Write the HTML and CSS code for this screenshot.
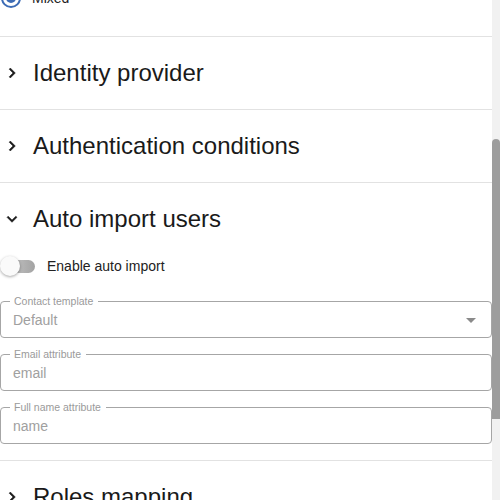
FILE: index.html
```html
<!DOCTYPE html>
<html>
<head>
<meta charset="utf-8">
<link rel="stylesheet" href="styles.css">
</head>
<body>
<div class="page">
  <div class="content">
    <div class="section first">
      <label class="radio-row">
        <span class="radio"><span class="dot"></span></span>
        <span class="radio-label">Mixed</span>
      </label>
    </div>

    <div class="section">
      <div class="header">
        <svg class="chev" viewBox="0 0 24 24"><path d="M10 6L8.59 7.41 13.17 12l-4.58 4.59L10 18l6-6z"/></svg>
        <span class="title">Identity provider</span>
      </div>
    </div>

    <div class="section">
      <div class="header">
        <svg class="chev" viewBox="0 0 24 24"><path d="M10 6L8.59 7.41 13.17 12l-4.58 4.59L10 18l6-6z"/></svg>
        <span class="title">Authentication conditions</span>
      </div>
    </div>

    <div class="section open">
      <div class="header">
        <svg class="chev" viewBox="0 0 24 24"><path d="M16.59 8.59L12 13.17 7.41 8.59 6 10l6 6 6-6z"/></svg>
        <span class="title">Auto import users</span>
      </div>
      <div class="body">
        <div class="toggle-row">
          <span class="switch"><span class="track"></span><span class="thumb"></span></span>
          <span class="toggle-label">Enable auto import</span>
        </div>

        <fieldset class="field">
          <legend>Contact template</legend>
          <div class="value-row">
            <span class="value">Default</span>
            <svg class="caret" viewBox="7 10 10 5"><path d="M7 10l5 5 5-5z"/></svg>
          </div>
        </fieldset>

        <fieldset class="field">
          <legend>Email attribute</legend>
          <div class="value-row"><span class="value">email</span></div>
        </fieldset>

        <fieldset class="field">
          <legend>Full name attribute</legend>
          <div class="value-row"><span class="value">name</span></div>
        </fieldset>
      </div>
    </div>

    <div class="section">
      <div class="header">
        <svg class="chev" viewBox="0 0 24 24"><path d="M10 6L8.59 7.41 13.17 12l-4.58 4.59L10 18l6-6z"/></svg>
        <span class="title">Roles mapping</span>
      </div>
    </div>
  </div>
  <div class="scrollbar"><div class="thumb-bar"></div></div>
</div>
</body>
</html>
```

FILE: styles.css
```css
html, body {
  margin: 0;
  padding: 0;
  background: #ffffff;
}

body {
  font-family: "Liberation Sans", Arial, sans-serif;
  color: #1f1f1f;
}

.page {
  display: flex;
  width: 500px;
  height: 500px;
  overflow: hidden;
}

.content {
  flex: 1;
  min-width: 0;
  display: flex;
  flex-direction: column;
}

.section {
  border-bottom: 1px solid #e2e2e2;
  flex-shrink: 0;
}

.section.first {
  margin-top: -12px;
  padding-bottom: 28px;
}

.radio-row {
  display: flex;
  align-items: center;
  height: 20px;
  gap: 11px;
}

.radio {
  width: 16px;
  height: 16px;
  margin-left: 1px;
  border: 2px solid #3d6cb5;
  border-radius: 50%;
  display: flex;
  align-items: center;
  justify-content: center;
}

.radio .dot {
  width: 10px;
  height: 10px;
  border-radius: 50%;
  background: #3d6cb5;
}

.radio-label {
  font-size: 14px;
  color: #222222;
}

.header {
  height: 72px;
  display: flex;
  align-items: center;
}

.chev {
  width: 20px;
  height: 20px;
  margin-left: 2px;
  fill: #1a1a1a;
  stroke: #1a1a1a;
  stroke-width: 0.6;
  flex-shrink: 0;
}

.title {
  margin-left: 11px;
  font-size: 24px;
  color: #1a1a1a;
}

.body {
  display: flex;
  flex-direction: column;
  gap: 9px;
  padding-bottom: 16px;
}

.toggle-row {
  display: flex;
  align-items: center;
  height: 20px;
  margin-top: 1px;
  margin-bottom: 9px;
}

.switch {
  position: relative;
  width: 36px;
  height: 20px;
  flex-shrink: 0;
  display: flex;
  align-items: center;
}

.track {
  display: block;
  width: 28px;
  height: 13px;
  margin-left: 7px;
  border-radius: 7px;
  background: linear-gradient(to right, #c8c8c8, #a3a3a3);
}

.thumb {
  position: absolute;
  left: 0;
  top: 0;
  width: 20px;
  height: 20px;
  border-radius: 50%;
  background: #fafafa;
  box-shadow: 0 1px 3px rgba(0, 0, 0, 0.35);
}

.toggle-label {
  margin-left: 11px;
  font-size: 14px;
  color: #222222;
}

.field {
  margin: 0;
  padding: 0 12px 5px 12px;
  border: 1px solid #a6a6a6;
  border-radius: 4px;
  min-width: 0;
}

.field legend {
  margin-left: -3px;
  padding: 0 5px 0 4px;
  font-size: 10.5px;
  line-height: 14px;
  color: #9a9a9a;
}

.value-row {
  display: flex;
  align-items: center;
  height: 24px;
}

.value {
  flex: 1;
  font-size: 14px;
  color: #a0a0a0;
}

.caret {
  width: 10px;
  height: 5px;
  margin-right: 3px;
  fill: #8a8a8a;
}

.scrollbar {
  width: 8px;
  height: 500px;
  background: #f1f1f1;
  flex-shrink: 0;
  display: flex;
  flex-direction: column;
}

.thumb-bar {
  margin-top: 139px;
  height: 280px;
  background: #9d9d9d;
  border-radius: 4px 4px 0 0;
}
```
